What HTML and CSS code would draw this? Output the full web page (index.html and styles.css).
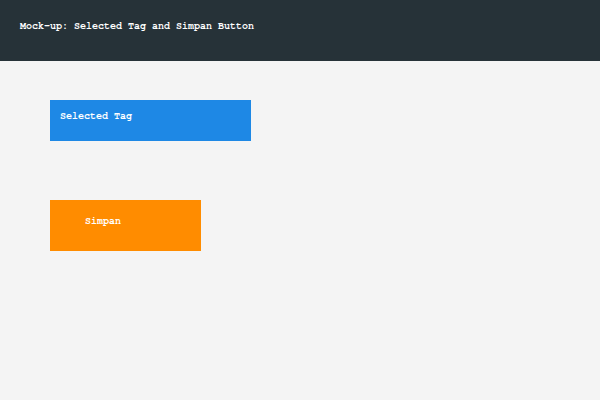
FILE: index.html
```html
<!DOCTYPE html>
<html>
<head>
<meta charset="utf-8">
<link rel="stylesheet" href="styles.css">
</head>
<body>
<header class="topbar">Mock-up: Selected Tag and Simpan Button</header>
<main class="content">
  <div class="tag">Selected Tag</div>
  <button class="save">Simpan</button>
</main>
</body>
</html>
```
FILE: styles.css
```css
html, body {
  margin: 0;
  padding: 0;
  background: #f4f4f4;
  font-family: FreeMono, "Liberation Mono", monospace;
  font-size: 10px;
  font-weight: bold;
  color: #ffffff;
}
.topbar {
  box-sizing: border-box;
  height: 61px;
  padding: 20px;
  background: #263238;
  line-height: 12px;
}
.content {
  display: flex;
  flex-direction: column;
  align-items: flex-start;
  padding: 39px 50px;
  gap: 59px;
}
.tag {
  box-sizing: border-box;
  width: 201px;
  height: 41px;
  padding: 10px;
  background: #1e88e5;
  line-height: 12px;
}
.save {
  box-sizing: border-box;
  width: 151px;
  height: 51px;
  padding: 15px 35px;
  margin: 0;
  border: none;
  background: #ff8c00;
  color: #ffffff;
  font: inherit;
  line-height: 12px;
  text-align: left;
  display: flex;
  align-items: flex-start;
}
```
